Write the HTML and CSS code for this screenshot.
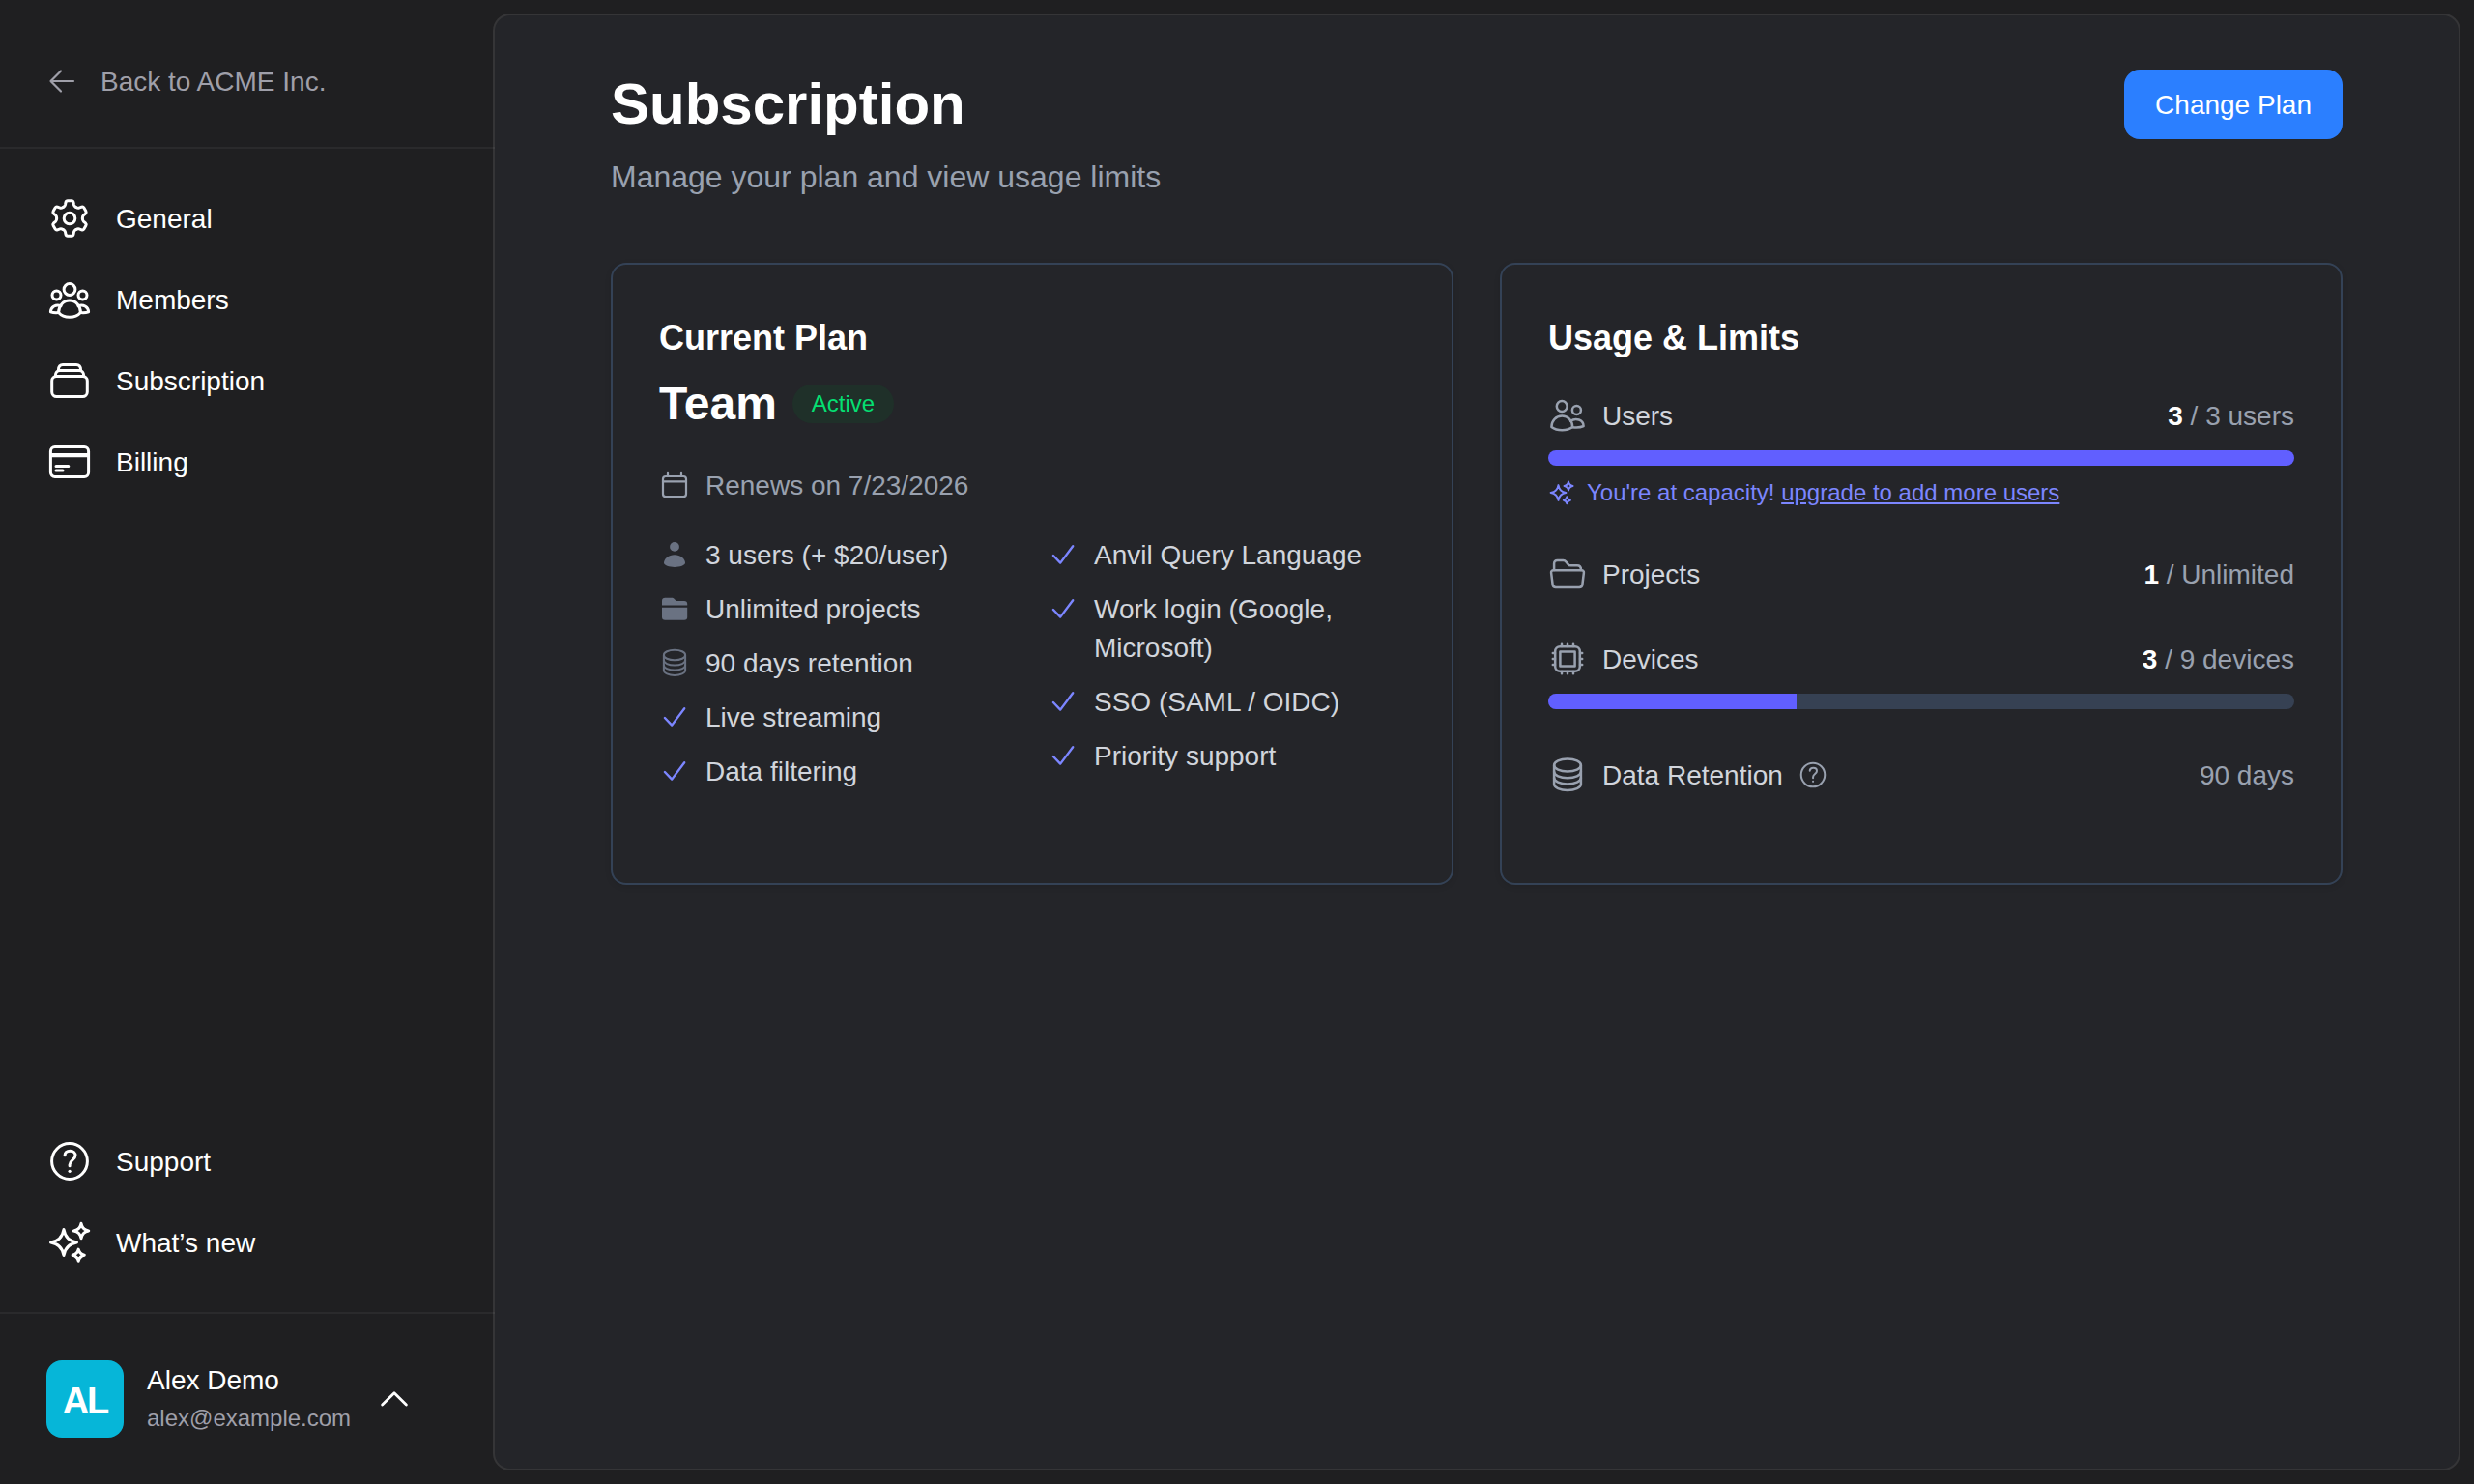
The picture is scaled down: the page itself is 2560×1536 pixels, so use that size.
FILE: index.html
```html
<!DOCTYPE html>
<html lang="en">

<head>
  <meta charset="UTF-8">
  <meta name="viewport" content="width=device-width, initial-scale=1.0">
  <title>Subscription</title>
  <link rel="stylesheet" href="styles.css">
</head>

<body>
  <!-- Icon sprite -->
  <svg class="sprite" width="0" height="0" aria-hidden="true">
    <symbol id="icon-back" viewBox="0 0 32 32">
      <path d="M15 5.5L4.5 16L15 26.5M4.5 16H28" />
    </symbol>
    <symbol id="icon-gear" viewBox="0 0 48 48">
      <g id="tooth">
        <path d="M17.35 12.45Q19.2 11.4 19.5 10L20 7.3Q20.4 5.7 22 5.7H26Q27.6 5.7 28 7.3L28.5 10Q28.8 11.4 30.65 12.45" />
      </g>
      <use href="#tooth" transform="rotate(60 24 24)" />
      <use href="#tooth" transform="rotate(120 24 24)" />
      <use href="#tooth" transform="rotate(180 24 24)" />
      <use href="#tooth" transform="rotate(240 24 24)" />
      <use href="#tooth" transform="rotate(300 24 24)" />
      <circle cx="24" cy="24" r="5.8" />
    </symbol>
    <symbol id="icon-members" viewBox="0 0 48 48">
      <circle cx="24" cy="13.5" r="5.9" />
      <circle cx="10.5" cy="19.5" r="4.5" />
      <circle cx="37.5" cy="19.5" r="4.5" />
      <path d="M12.6 37.5C12.6 30.5 17.5 25.1 24 25.1S35.4 30.5 35.4 37.5C32.5 40.8 28.5 42.3 24 42.3S15.5 40.8 12.6 37.5Z" />
      <path d="M15 30.6C10 28.6 4.4 31.6 4.4 36.8C6.8 37.6 9.5 37.8 12.6 37.5" />
      <path d="M33 30.6C38 28.6 43.6 31.6 43.6 36.8C41.2 37.6 38.5 37.8 35.4 37.5" />
    </symbol>
    <symbol id="icon-stack" viewBox="0 0 48 48">
      <rect x="5.7" y="19.4" width="36.6" height="21.2" rx="4.8" />
      <path d="M9.3 19C9.3 15.5 11.3 13.4 14 13.4H34C36.7 13.4 38.7 15.5 38.7 19" />
      <path d="M12.4 13C12.4 9.4 14.4 7.4 17 7.4H31C33.6 7.4 35.6 9.4 35.6 13" />
    </symbol>
    <symbol id="icon-card" viewBox="0 0 48 48">
      <rect x="4.4" y="8.6" width="39.2" height="30.8" rx="4.4" />
      <path d="M4.4 17.1H43.6" stroke-width="4.2" stroke-linecap="butt" />
      <path d="M10 28.6H22.8M10 33.1H17" />
    </symbol>
    <symbol id="icon-help" viewBox="0 0 48 48">
      <circle cx="24" cy="24" r="18.4" />
      <path d="M19.1 17.8C19.1 15 21.2 13.2 24.5 13.2C27.8 13.2 30 15.2 30 18C30 22.4 24.1 22.8 24.1 27.4V28.7" />
      <circle cx="24.1" cy="34.3" r="1.6" fill="currentColor" stroke="none" />
    </symbol>
    <symbol id="icon-sparkles" viewBox="0 0 48 48">
      <path d="M18 10.5C19.3 18.4 23.6 22.7 31.5 24C23.6 25.3 19.3 29.6 18 37.5C16.7 29.6 12.4 25.3 4.5 24C12.4 22.7 16.7 18.4 18 10.5Z" />
      <path d="M36 4.3C36.8 8.8 39.2 11.2 43.7 12C39.2 12.8 36.8 15.2 36 19.7C35.2 15.2 32.8 12.8 28.3 12C32.8 11.2 35.2 8.8 36 4.3Z" />
      <path d="M33.2 31.1C33.9 34.6 35.8 36.5 39.3 37.2C35.8 37.9 33.9 39.8 33.2 43.3C32.5 39.8 30.6 37.9 27.1 37.2C30.6 36.5 32.5 34.6 33.2 31.1Z" />
    </symbol>
    <symbol id="icon-chevron-up" viewBox="0 0 32 32">
      <path d="M3.6 22L16 9.8L28.4 22" />
    </symbol>
    <symbol id="icon-calendar" viewBox="0 0 32 32">
      <rect x="4" y="7" width="24" height="21" rx="2.8" />
      <path d="M4 12.3H28M9 3.8V7M23 3.8V7" />
    </symbol>
    <symbol id="icon-person" viewBox="0 0 32 32">
      <circle cx="16" cy="7.9" r="4.9" />
      <path d="M5 24.6C5 20 10 16.2 16 16.2S27 20 27 24.6C27 27.4 21.5 29 16 29S5 27.4 5 24.6Z" />
    </symbol>
    <symbol id="icon-folder-fill" viewBox="0 0 32 32">
      <path d="M3 12.4V8C3 5.9 4.2 4.8 6.3 4.8H13C14 4.8 15 5.2 16 6.2L17.8 7.9H26C28.1 7.9 29.2 9 29.2 11V12.4Z" />
      <path d="M3 14.8H29.2V24.8C29.2 26.8 28.2 27.8 26 27.8H6.2C4 27.8 3 26.8 3 24.8Z" />
    </symbol>
    <symbol id="icon-database" viewBox="0 0 40 40">
      <ellipse cx="20" cy="10" rx="13.9" ry="6.6" />
      <path d="M6.1 10V29.6A13.9 6.5 0 0 0 33.9 29.6V10" />
      <path d="M6.1 16.7A13.9 6.5 0 0 0 33.9 16.7M6.1 23A13.9 6.5 0 0 0 33.9 23" />
    </symbol>
    <symbol id="icon-check" viewBox="0 0 32 32">
      <path d="M5.9 17L13.2 24.6L26.2 7.2" />
    </symbol>
    <symbol id="icon-users" viewBox="0 0 40 40">
      <ellipse cx="14.2" cy="10.5" rx="5.4" ry="5.6" />
      <circle cx="29.4" cy="14.5" r="4.5" />
      <path d="M3.4 32C3.4 25.5 8 20.6 14.3 20.6S25.2 25.5 25.2 32C22 34.4 18.5 35.3 14.3 35.3S6.6 34.4 3.4 32Z" />
      <path d="M23.2 25.8C28.5 22 36.6 24.5 36.6 31C33.5 32.5 29.5 32.8 25 32.2" />
    </symbol>
    <symbol id="icon-folder" viewBox="0 0 40 40">
      <path d="M5.5 16.3H34.5C36.3 16.3 37.1 17.3 36.9 18.8L35.4 31C35.2 32.9 34 33.9 32.2 33.9H7.8C6 33.9 4.8 32.9 4.6 31L3.1 18.8C2.9 17.3 3.7 16.3 5.5 16.3Z" />
      <path d="M6.1 16V9.5C6.1 7.3 7.3 6.1 9.5 6.1H15.5C17 6.1 17.8 6.8 18.8 7.9L20.5 9.9C21.2 10.8 22 11.3 23.3 11.3H30C32.5 11.3 34 12.8 34 16" />
    </symbol>
    <symbol id="icon-chip" viewBox="0 0 40 40">
      <rect x="7.2" y="7.2" width="25.6" height="25.6" rx="5" />
      <rect x="12.4" y="12.4" width="15.2" height="15.2" />
      <path d="M14 4.8V7M20 4.8V7M26 4.8V7M14 33V35.2M20 33V35.2M26 33V35.2M4.8 14H7M4.8 20H7M4.8 26H7M33 14H35.2M33 20H35.2M33 26H35.2" />
    </symbol>
  </svg>

  <div class="layout">
    <aside class="sidebar">
      <div class="sidebar-header">
        <a class="back-link" href="#">
          <svg class="icon icon-sm"><use href="#icon-back" /></svg>
          <span>Back to ACME Inc.</span>
        </a>
      </div>

      <nav class="sidebar-body">
        <div class="nav-group">
          <a class="nav-item" href="#"><svg class="icon icon-lg"><use href="#icon-gear" /></svg><span>General</span></a>
          <a class="nav-item" href="#"><svg class="icon icon-lg"><use href="#icon-members" /></svg><span>Members</span></a>
          <a class="nav-item" href="#"><svg class="icon icon-lg"><use href="#icon-stack" /></svg><span>Subscription</span></a>
          <a class="nav-item" href="#"><svg class="icon icon-lg"><use href="#icon-card" /></svg><span>Billing</span></a>
        </div>
        <div class="nav-group">
          <a class="nav-item" href="#"><svg class="icon icon-lg"><use href="#icon-help" /></svg><span>Support</span></a>
          <a class="nav-item" href="#"><svg class="icon icon-lg"><use href="#icon-sparkles" /></svg><span>What’s new</span></a>
        </div>
      </nav>

      <div class="sidebar-footer">
        <div class="avatar">AL</div>
        <div class="account">
          <div class="account-name">Alex Demo</div>
          <div class="account-email">alex@example.com</div>
        </div>
        <svg class="icon icon-sm chevron"><use href="#icon-chevron-up" /></svg>
      </div>
    </aside>

    <main class="panel">
      <header class="page-header">
        <div>
          <h1>Subscription</h1>
          <p>Manage your plan and view usage limits</p>
        </div>
        <button class="btn" type="button">Change Plan</button>
      </header>

      <div class="cards">
        <section class="card">
          <h2>Current Plan</h2>
          <div class="plan">
            <span class="plan-name">Team</span>
            <span class="badge">Active</span>
          </div>
          <div class="renewal">
            <svg class="icon icon-sm"><use href="#icon-calendar" /></svg>
            <span>Renews on 7/23/2026</span>
          </div>
          <div class="features">
            <ul>
              <li><svg class="icon icon-sm solid"><use href="#icon-person" /></svg>3 users (+ $20/user)</li>
              <li><svg class="icon icon-sm solid"><use href="#icon-folder-fill" /></svg>Unlimited projects</li>
              <li><svg class="icon icon-sm dim"><use href="#icon-database" /></svg>90 days retention</li>
              <li><svg class="icon icon-sm check"><use href="#icon-check" /></svg>Live streaming</li>
              <li><svg class="icon icon-sm check"><use href="#icon-check" /></svg>Data filtering</li>
            </ul>
            <ul>
              <li><svg class="icon icon-sm check"><use href="#icon-check" /></svg>Anvil Query Language</li>
              <li><svg class="icon icon-sm check"><use href="#icon-check" /></svg>Work login (Google, Microsoft)</li>
              <li><svg class="icon icon-sm check"><use href="#icon-check" /></svg>SSO (SAML / OIDC)</li>
              <li><svg class="icon icon-sm check"><use href="#icon-check" /></svg>Priority support</li>
            </ul>
          </div>
        </section>

        <section class="card">
          <h2>Usage &amp; Limits</h2>
          <div class="usage-list">
            <div class="usage">
              <div class="usage-row">
                <svg class="icon icon-md"><use href="#icon-users" /></svg>
                <span class="usage-label">Users</span>
                <span class="usage-value"><strong>3</strong> / 3 users</span>
              </div>
              <div class="progress">
                <div class="progress-fill" style="width: 100%"></div>
              </div>
              <div class="capacity">
                <svg class="icon icon-xs"><use href="#icon-sparkles" /></svg>
                <span>You're at capacity! <a href="#">upgrade to add more users</a></span>
              </div>
            </div>

            <div class="usage">
              <div class="usage-row">
                <svg class="icon icon-md"><use href="#icon-folder" /></svg>
                <span class="usage-label">Projects</span>
                <span class="usage-value"><strong>1</strong> / Unlimited</span>
              </div>
            </div>

            <div class="usage">
              <div class="usage-row">
                <svg class="icon icon-md"><use href="#icon-chip" /></svg>
                <span class="usage-label">Devices</span>
                <span class="usage-value"><strong>3</strong> / 9 devices</span>
              </div>
              <div class="progress">
                <div class="progress-fill" style="width: 33.33%"></div>
              </div>
            </div>

            <div class="usage">
              <div class="usage-row">
                <svg class="icon icon-md"><use href="#icon-database" /></svg>
                <span class="usage-label">Data Retention</span>
                <svg class="icon icon-sm hint"><use href="#icon-help" /></svg>
                <span class="usage-value">90 days</span>
              </div>
            </div>
          </div>
        </section>
      </div>
    </main>
  </div>
</body>

</html>
```

FILE: styles.css
```css
:root {
  --bg: #1f1f21;
  --panel: #242529;
  --line: rgba(255, 255, 255, 0.05);
  --card-line: #344256;
  --track: #364153;
  --text: #d1d5dc;
  --muted: #99a1af;
  --zinc: #9f9fa9;
  --blue: #2b7fff;
  --indigo: #615fff;
  --indigo-light: #7c86ff;
}

* {
  box-sizing: border-box;
  margin: 0;
  padding: 0;
}

body {
  background-color: var(--bg);
  color: #fff;
  font-family: "Liberation Sans", Arial, Helvetica, sans-serif;
  font-size: 28px;
  line-height: 40px;
}

a {
  color: inherit;
  text-decoration: none;
}

.sprite {
  position: absolute;
}

.layout {
  display: flex;
  height: 100vh;
}

/* Icons */
.icon {
  flex-shrink: 0;
  fill: none;
  stroke: currentColor;
  stroke-width: 2.2;
  stroke-linecap: round;
  stroke-linejoin: round;
}

.icon-xs {
  width: 28px;
  height: 28px;
  stroke-width: 3.4;
}

.icon-sm {
  width: 32px;
  height: 32px;
}

.icon-md {
  width: 40px;
  height: 40px;
  stroke-width: 2.5;
}

.icon-lg {
  width: 48px;
  height: 48px;
  stroke-width: 3;
}

/* Optical centering of labels next to icons */
.back-link span,
.nav-item span,
.renewal span,
.usage-label,
.usage-value {
  margin-bottom: -2px;
}

/* Sidebar */
.sidebar {
  display: flex;
  flex-direction: column;
  flex-shrink: 0;
  width: 512px;
}

.sidebar-header {
  padding: 48px 32px 32px;
  border-bottom: 2px solid var(--line);
}

.back-link {
  display: flex;
  align-items: center;
  gap: 24px;
  height: 72px;
  padding: 0 16px;
  color: var(--zinc);
}

.sidebar-body {
  display: flex;
  flex: 1;
  flex-direction: column;
  justify-content: space-between;
  padding: 32px;
}

.nav-group {
  display: flex;
  flex-direction: column;
  gap: 4px;
}

.nav-item {
  display: flex;
  align-items: center;
  gap: 24px;
  height: 80px;
  padding: 0 16px;
}

.sidebar-footer {
  display: flex;
  align-items: center;
  gap: 24px;
  padding: 48px;
  border-top: 2px solid var(--line);
}

.avatar {
  width: 80px;
  height: 80px;
  border-radius: 16px;
  background-color: #06b6d8;
  font-size: 38px;
  font-weight: 700;
  letter-spacing: -2px;
  line-height: 84px;
  text-align: center;
}

.account {
  width: 216px;
}

.account-name {
  margin: 1px 0 -1px;
}

.account-email {
  color: var(--zinc);
  font-size: 24px;
}

.chevron {
  stroke-width: 2.8;
}

/* Main panel */
.panel {
  flex: 1;
  margin: 16px 16px 16px 0;
  padding: 56px 120px;
  border-radius: 16px;
  background-color: var(--panel);
  box-shadow: 0 0 0 2px rgba(255, 255, 255, 0.1);
}

.page-header {
  display: flex;
  align-items: flex-start;
  justify-content: space-between;
  margin-bottom: 65px;
}

.page-header h1 {
  font-size: 60px;
  line-height: 72px;
}

.page-header p {
  margin-top: 15px;
  color: var(--muted);
  font-size: 32px;
  line-height: 48px;
}

.btn {
  height: 72px;
  padding: 2px 32px 0;
  border: none;
  border-radius: 16px;
  background-color: var(--blue);
  color: #fff;
  font: inherit;
}

.cards {
  display: grid;
  grid-template-columns: 1fr 1fr;
  gap: 48px;
}

.card {
  padding: 48px 48px 92px;
  border: 2px solid var(--card-line);
  border-radius: 16px;
  box-shadow: 0 2px 6px rgba(0, 0, 0, 0.1);
}

.card h2 {
  font-size: 36px;
  line-height: 56px;
}

/* Current plan */
.plan {
  display: flex;
  align-items: center;
  gap: 16px;
  margin-top: 8px;
}

.plan-name {
  font-size: 48px;
  font-weight: 700;
  line-height: 64px;
}

.badge {
  padding: 4px 20px;
  border-radius: 20px;
  background-color: #1f3029;
  color: #05df72;
  font-size: 24px;
  line-height: 32px;
}

.renewal {
  display: flex;
  align-items: center;
  gap: 16px;
  height: 40px;
  margin-top: 32px;
  color: var(--muted);
}

.features {
  display: grid;
  grid-template-columns: 1fr 1fr;
  gap: 32px;
  margin-top: 33px;
  color: var(--text);
}

.features ul {
  display: flex;
  flex-direction: column;
  gap: 16px;
  list-style: none;
}

.features li {
  display: flex;
  gap: 16px;
}

.features .icon {
  margin-top: 3px;
}

.solid {
  color: #6a7282;
  fill: currentColor;
  stroke: none;
}

.dim {
  color: #6a7282;
  stroke-width: 2.5;
}

.check {
  color: var(--indigo-light);
  stroke-width: 2.4;
}

/* Usage */
.usage-list {
  display: flex;
  flex-direction: column;
  gap: 48px;
  margin-top: 32px;
}

.usage-row {
  display: flex;
  align-items: center;
  gap: 16px;
  color: var(--muted);
}

.usage-label {
  color: var(--text);
}

.usage-value {
  margin-left: auto;
}

.usage-value strong {
  color: #fff;
}

.progress {
  height: 16px;
  margin-top: 16px;
  overflow: hidden;
  border-radius: 8px;
  background-color: var(--track);
}

.progress-fill {
  height: 100%;
  background-color: var(--indigo);
}

.capacity {
  display: flex;
  align-items: center;
  gap: 12px;
  margin-top: 12px;
  color: var(--indigo-light);
  font-size: 24px;
  line-height: 32px;
}

.capacity a {
  text-decoration: underline;
}

.hint {
  margin-left: -1px;
  stroke-width: 3;
}
```
